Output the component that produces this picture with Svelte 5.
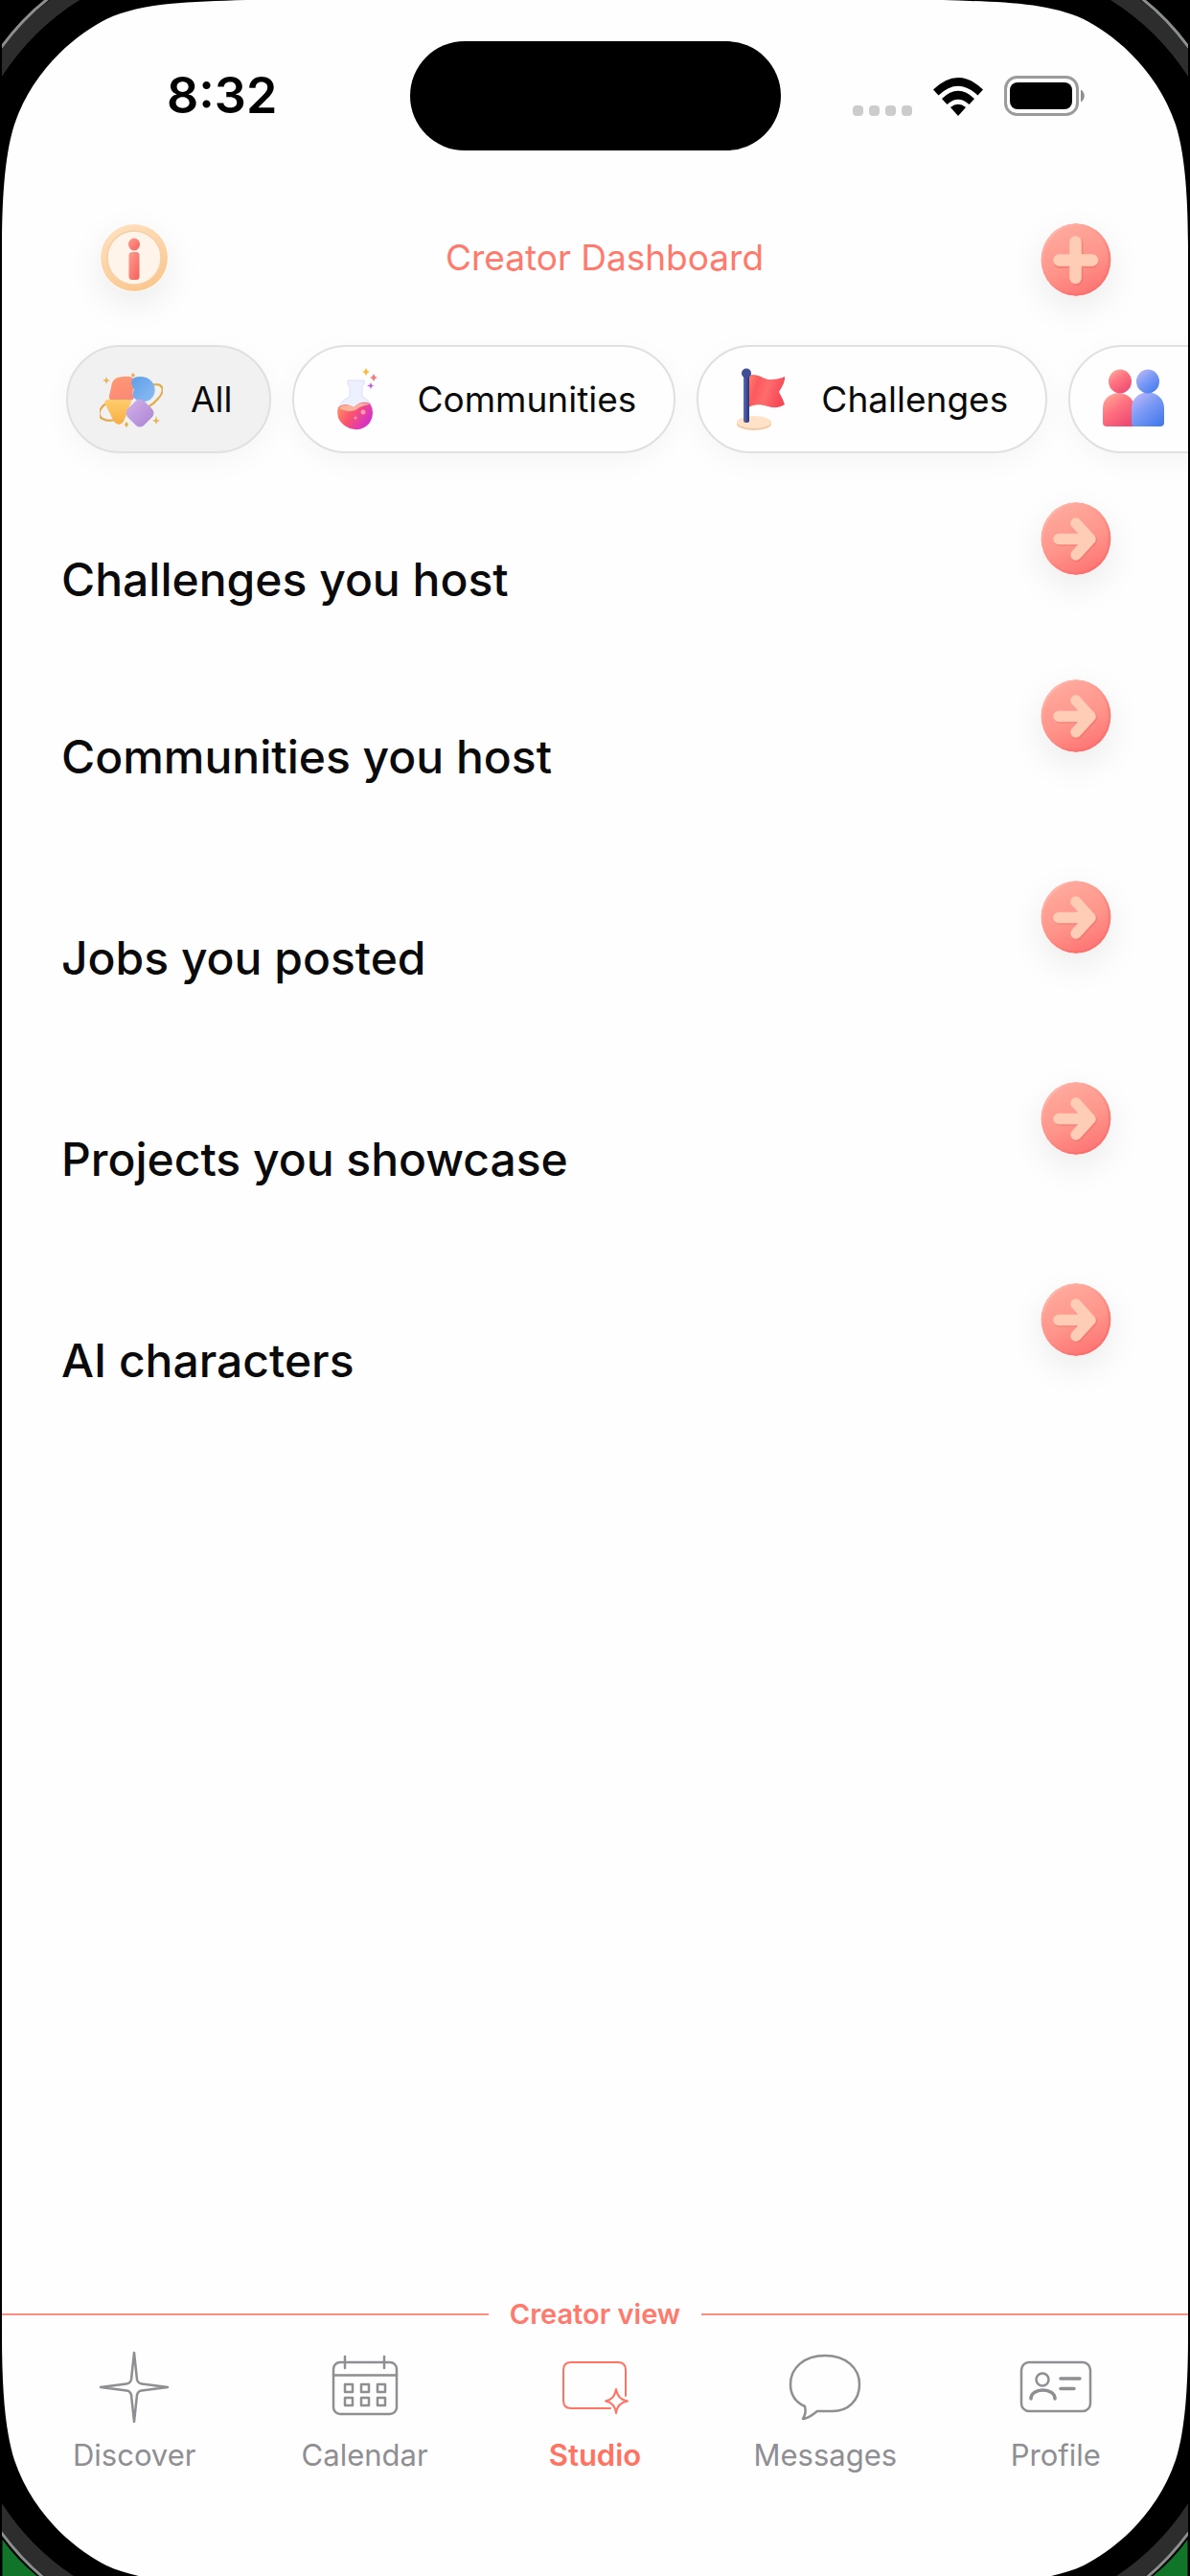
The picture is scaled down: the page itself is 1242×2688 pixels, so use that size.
<script>
  const chips = [
    { label: 'All', icon: 'all', active: true },
    { label: 'Communities', icon: 'flask' },
    { label: 'Challenges', icon: 'flag' },
    { icon: 'people' }
  ];
  const sections = [
    'Challenges you host',
    'Communities you host',
    'Jobs you posted',
    'Projects you showcase',
    'AI characters'
  ];
  const tabs = ['Discover', 'Calendar', 'Studio', 'Messages', 'Profile'];
  const corners = ['tl', 'tr', 'bl', 'br'];
</script>

<svg class="defs" width="0" height="0" aria-hidden="true">
  <defs>
    <linearGradient id="coral" x1="0.2" y1="0" x2="0.6" y2="1">
      <stop offset="0" stop-color="#ffac9f" /><stop offset="0.6" stop-color="#ff948a" /><stop offset="1" stop-color="#fd7473" />
    </linearGradient>
    <linearGradient id="shine" x1="0" y1="0" x2="0.7" y2="0.7">
      <stop offset="0" stop-color="#ffd6cb" /><stop offset="0.5" stop-color="#ff9a8e" stop-opacity="0.2" /><stop offset="1" stop-color="#f86a68" stop-opacity="0.5" />
    </linearGradient>
    <linearGradient id="ring" x1="0" y1="0" x2="0.5" y2="1">
      <stop offset="0" stop-color="#ffe3c4" /><stop offset="1" stop-color="#fbc890" />
    </linearGradient>
    <linearGradient id="redI" x1="0" y1="0" x2="1" y2="1">
      <stop offset="0" stop-color="#ff9d90" /><stop offset="1" stop-color="#f5605a" />
    </linearGradient>
    <linearGradient id="tomato" x1="0" y1="0" x2="0.4" y2="1">
      <stop offset="0" stop-color="#ff9a72" /><stop offset="1" stop-color="#fa8a78" />
    </linearGradient>
    <linearGradient id="sky" x1="0" y1="0" x2="1" y2="1">
      <stop offset="0" stop-color="#5e9fe8" /><stop offset="1" stop-color="#8dbcf2" />
    </linearGradient>
    <linearGradient id="gold" x1="0" y1="0" x2="0" y2="1">
      <stop offset="0" stop-color="#ffce6b" /><stop offset="1" stop-color="#f5ae45" />
    </linearGradient>
    <linearGradient id="lilac" x1="0" y1="0" x2="1" y2="1">
      <stop offset="0" stop-color="#d2b4ea" /><stop offset="1" stop-color="#ab82d2" />
    </linearGradient>
    <linearGradient id="potion" x1="0" y1="0" x2="1" y2="0.5">
      <stop offset="0" stop-color="#ff9a62" /><stop offset="0.5" stop-color="#fb5270" /><stop offset="1" stop-color="#d532c8" />
    </linearGradient>
    <linearGradient id="cloth" x1="0" y1="0" x2="1" y2="0.3">
      <stop offset="0" stop-color="#ff8272" /><stop offset="0.3" stop-color="#fb5a5e" /><stop offset="0.6" stop-color="#ff6c6c" /><stop offset="1" stop-color="#f64a58" />
    </linearGradient>
    <linearGradient id="pole" x1="0" y1="0" x2="1" y2="0">
      <stop offset="0" stop-color="#5a6cae" /><stop offset="1" stop-color="#27347a" />
    </linearGradient>
    <linearGradient id="rose" x1="0" y1="0" x2="0.7" y2="1">
      <stop offset="0" stop-color="#ffb39a" /><stop offset="0.5" stop-color="#ff7280" /><stop offset="1" stop-color="#ee4a72" />
    </linearGradient>
    <linearGradient id="indigo" x1="0" y1="0" x2="0.8" y2="1">
      <stop offset="0" stop-color="#c8bdfb" /><stop offset="0.5" stop-color="#7b9af4" /><stop offset="1" stop-color="#467bee" />
    </linearGradient>
  </defs>
</svg>

<div class="screen">
  <header class="status">
    <time class="clock">8:32</time>
    <div class="island"></div>
    <div class="signals">
      <span class="dots"><i></i><i></i><i></i><i></i></span>
      <svg class="wifi" viewBox="0 0 52 40" aria-hidden="true">
        <path d="M0 12.500Q26-12.500 52 12.500L46.500 18.500Q26-1 5.500 18.500Z" />
        <path d="M9 22Q26 5.500 43 22L37.500 28Q26 17.500 14.500 28Z" />
        <path d="M18 31Q26 24.500 34 31L26 40Z" />
      </svg>
      <svg class="battery" viewBox="0 0 86 42" aria-hidden="true">
        <rect x="1.500" y="1.500" width="75" height="39" rx="12" fill="none" stroke="#9b9b9b" stroke-width="3" />
        <rect x="6" y="7" width="65" height="28" rx="8" />
        <path d="M80 14.500C85 17 85 25 80 27.500Z" fill="#8f8f8f" />
      </svg>
    </div>
  </header>

  <div class="titlebar">
    <button class="round" aria-label="About this dashboard">
      <svg class="info" viewBox="0 0 72 72" aria-hidden="true">
        <circle cx="36" cy="36" r="35" fill="url(#ring)" />
        <circle cx="36" cy="36" r="28" fill="#fff4ea" stroke="#f6cfa6" stroke-width="1.500" />
        <ellipse cx="36" cy="22" rx="6" ry="6.500" fill="url(#redI)" />
        <rect x="30.500" y="30" width="11" height="29" rx="3.500" fill="url(#redI)" />
      </svg>
    </button>
    <h1>Creator Dashboard</h1>
    <button class="round" aria-label="Create">
      <svg class="disc" viewBox="0 0 74 76" aria-hidden="true">
        <ellipse cx="37" cy="38" rx="36.500" ry="38" fill="url(#coral)" />
        <ellipse cx="37" cy="38" rx="35" ry="36.500" fill="none" stroke="url(#shine)" stroke-width="2" />
        <path d="M38 21V59M20 40.500H54" stroke="#ee6f68" stroke-opacity="0.5" stroke-width="13" stroke-linecap="round" />
        <path d="M36.500 19.500V57M19.500 38.500H54" stroke="#ffcdb6" stroke-width="12.500" stroke-linecap="round" />
      </svg>
    </button>
  </div>

  <div class="chips">
    {#each chips as chip}
      <button class="chip" class:active={chip.active} class:bare={!chip.label} aria-pressed={!!chip.active} aria-label={chip.label ?? 'People'}>
        <svg viewBox="0 0 66 66" aria-hidden="true">
          {#if chip.icon === 'all'}
            <path d="M54 18C65 15 70 22 61 32Q57 37 50 41M8 36C-1 42 -3 50 3 53Q8 56 17 54" fill="none" stroke="#e3ab50" stroke-width="2.200" />
            <path d="M12 20Q13 9 25 9Q34 8 35 12Q33 17 36 21Q33 26 36 31Q35 34 30 34L13 34Q9 33 10 29Z" fill="url(#tomato)" />
            <path d="M34 12Q36 9 42 9C62 9 62 34 47 35Q39 36 35 30Q34 26 36 22Q32 17 34 12Z" fill="url(#sky)" />
            <path d="M9 33H29Q35 33 32 38L25 56Q20 62 15 56L6 38Q4 33 9 33Z" fill="url(#gold)" />
            <path d="M38 34Q42 31 46 34L55 43Q58 47 55 51L46 60Q42 63 38 60L29 51Q26 47 29 43Z" fill="url(#lilac)" />
            <path d="M7 9L8 12L11 13L8 14L7 17L6 14L3 13L6 12ZM35 5L37 8L34 10L33 7ZM59 50L60 54L63 55L60 56L59 59L58 56L55 55L58 54ZM28 56L30 59L28 62L26 59Z" fill="#e9ae4c" />
          {:else if chip.icon === 'flask'}
            <path d="M23 13H40V17L38 19V30Q49 35 49 46A19 19 0 0 1 13 46Q13 35 25 30V19L23 17Z" fill="#edf0ff" stroke="#dcdffa" stroke-width="1" />
            <path d="M13 41Q20 35 29 41Q38 33 46 37Q52 47 46 57Q38 67 25 63Q9 56 13 41Z" fill="url(#potion)" />
            <path d="M14 42Q21 36 29 41Q38 34 46 38Q37 39 31 44Q22 47 14 42Z" fill="#ffb29b" />
            <circle cx="39" cy="46" r="2.500" fill="#ff9ab4" /><circle cx="31" cy="52" r="1.500" fill="#ff9ab4" />
            <path d="M42 0L43.500 3L46 4L43.500 5L42 8L40.500 5L38 4L40.500 3Z" fill="#ffb72e" />
            <path d="M50 6L51.500 9L54 10L51.500 11L50 14L48.500 11L46 10L48.500 9Z" fill="#ff7470" />
            <path d="M47 15L48 17.500L50 18.500L48 19.500L47 22L46 19.500L43 18.500L46 17.500Z" fill="#c45ae0" />
          {:else if chip.icon === 'flag'}
            <ellipse cx="25" cy="58.500" rx="18" ry="6.500" fill="#f3c8a4" />
            <ellipse cx="25" cy="56.500" rx="18" ry="6.500" fill="#ffe2c8" />
            <path d="M19 8C28 4 34 12 42 12Q51 12 57 9Q58 14 51 25Q55 32 57 38C48 44 40 40 35 39Q26 37 19 41Z" fill="url(#cloth)" />
            <rect x="14" y="7" width="6" height="50" rx="2" fill="url(#pole)" />
            <circle cx="17" cy="5.500" r="5" fill="#3f4e94" />
          {:else}
            <path d="M1 42C1 21 34 21 34 42V61H5Q1 61 1 57Z" fill="url(#rose)" />
            <ellipse cx="19" cy="14" rx="12" ry="12.500" fill="url(#rose)" />
            <path d="M31 42C31 20 65 20 65 42V57Q65 61 61 61H34Q31 61 31 57Z" fill="url(#indigo)" />
            <ellipse cx="48" cy="14" rx="12" ry="12.500" fill="url(#indigo)" />
          {/if}
        </svg>
        {#if chip.label}<span>{chip.label}</span>{/if}
      </button>
    {/each}
  </div>

  <main>
    {#each sections as title}
      <section>
        <h2>{title}</h2>
        <button class="round" aria-label="Open {title}">
          <svg class="disc" viewBox="0 0 74 76" aria-hidden="true">
            <ellipse cx="37" cy="38" rx="36.500" ry="38" fill="url(#coral)" />
            <ellipse cx="37" cy="38" rx="35" ry="36.500" fill="none" stroke="url(#shine)" stroke-width="2" />
            <g fill="none" stroke-linecap="round" stroke-linejoin="round">
              <path d="M20 40H46M38 23.500L53.500 40L38 56.500" stroke="#ee6f68" stroke-opacity="0.5" stroke-width="11.500" />
              <path d="M19 38.500H46M37 22L52 38.500L37 55" stroke="#ffcdb6" stroke-width="11.500" />
            </g>
          </svg>
        </button>
      </section>
    {/each}
  </main>

  <footer>
    <div class="mode"><span>Creator view</span></div>
    <nav aria-label="Main">
      {#each tabs as tab}
        <a href="#{tab.toLowerCase()}" class:current={tab === 'Studio'} aria-current={tab === 'Studio' ? 'page' : undefined}>
          <svg viewBox="0 0 76 76" aria-hidden="true">
            {#if tab === 'Discover'}
              <path d="M38 2L41 30Q42 34 46 34.500L73 38L46 41.500Q42 42 41 46L38 74L35 46Q34 42 30 41.500L3 38L30 34.500Q34 34 35 30Z" />
            {:else if tab === 'Calendar'}
              <rect x="5" y="12" width="66" height="54" rx="7" />
              <path d="M5 25.500H71M17 6V18M58 6V18" />
              <path d="M17 35h8v8h-8zM34 35h8v8h-8zM51 35h8v8h-8zM17 49h8v8h-8zM34 49h8v8h-8zM51 49h8v8h-8z" />
            {:else if tab === 'Studio'}
              <path d="M54 60H13Q5 60 5 52V20Q5 12 13 12H62Q70 12 70 20V47" />
              <path d="M60 40Q61.500 51 72 52.500Q61.500 54 60 65Q58.500 54 49 52.500Q58.500 51 60 40Z" />
            {:else if tab === 'Messages'}
              <path d="M38 5C60 5 74 18 74 35C74 52 62 63 46 63H30Q20 71 15 71Q19 65 17 58C8 54 2 46 2 35C2 18 16 5 38 5Z" />
            {:else}
              <rect x="2" y="12" width="72" height="51" rx="8" />
              <ellipse cx="24" cy="30" rx="6.500" ry="6.500" />
              <path d="M12 50C12 38 37 38 37 50M43 29H63M43 39.500H57" stroke-width="3.500" />
            {/if}
          </svg>
          <span>{tab}</span>
        </a>
      {/each}
    </nav>
  </footer>

  {#each corners as c}
    <svg class="corner {c}" viewBox="0 0 260 260" aria-hidden="true">
      <path class="bezel" d="M0 -10H258V0C200 2 150 2 111 20C85 33 36 68 15 130C6 158 2 200 2 260H0Z" />
      <path class="rim" d="M0 0H83Q32 32 0 83Z" />
      <path class="outside" d="M0 0H48Q20 20 0 50Z" />
      <path class="edge" d="M51 -2Q22 20 -2 54" />
    </svg>
  {/each}
</div>

<style>
  :global(body) {
    margin: 0;
    background: #000;
  }
  .defs {
    position: absolute;
  }
  .screen {
    position: relative;
    box-sizing: border-box;
    min-height: 100vh;
    overflow: hidden;
    display: flex;
    flex-direction: column;
    background: #fefefe;
    border: solid #000;
    border-width: 0 2px;
    color: #0a0a0a;
    font-family: Inter, 'Liberation Sans', sans-serif;
  }
  button {
    border: 0;
    padding: 0;
    background: none;
    font: inherit;
    color: inherit;
    cursor: pointer;
  }
  h1,
  h2 {
    margin: 0;
  }
  svg {
    display: block;
    flex: none;
  }
  .status {
    display: grid;
    grid-template-columns: 1fr auto 1fr;
    align-items: center;
    padding: 43px 106px 0;
  }
  .clock {
    padding-left: 66px;
    font-size: 52px;
    font-weight: 600;
    line-height: 60px;
    color: #000;
  }
  .island {
    width: 387px;
    height: 114px;
    border-radius: 57px;
    background: #000;
  }
  .signals {
    display: flex;
    justify-content: flex-end;
    align-items: flex-end;
  }
  .dots {
    display: flex;
    gap: 6px;
    margin-right: 22px;
  }
  .dots i {
    width: 11px;
    height: 11px;
    border-radius: 4px;
    background: #ccc;
  }
  .wifi {
    width: 52px;
    height: 40px;
    margin-right: 22px;
  }
  .battery {
    width: 86px;
    height: 42px;
  }
  .titlebar {
    display: flex;
    justify-content: space-between;
    align-items: flex-start;
    padding: 76px 80px 0 102px;
  }
  h1 {
    padding-top: 14px;
    font-size: 37px;
    line-height: 44px;
    font-weight: 400;
    color: #ff7a6c;
  }
  .round svg {
    border-radius: 50%;
    box-shadow: 0 12px 36px rgba(0, 0, 0, 0.08);
  }
  .info {
    width: 72px;
    height: 72px;
  }
  .disc {
    width: 74px;
    height: 76px;
    fill: none;
  }
  .chips {
    display: flex;
    gap: 22px;
    overflow: hidden;
    padding: 51px 0 51px 67px;
  }
  .chip {
    flex: none;
    box-sizing: border-box;
    display: flex;
    align-items: center;
    gap: 29px;
    height: 113px;
    padding: 0 39px 0 33px;
    border: 2px solid #e0e0e0;
    border-radius: 57px;
    background: #fefefe;
    box-shadow: 0 8px 30px rgba(0, 0, 0, 0.04);
    font-size: 37px;
    line-height: 44px;
  }
  .chip.active {
    background: #f1f1f1;
  }
  .chip.bare {
    min-width: 240px;
  }
  .chip svg {
    width: 66px;
    height: 66px;
  }
  main {
    flex: 1;
  }
  section {
    display: flex;
    justify-content: space-between;
    align-items: flex-start;
    min-height: 210px;
    padding: 0 80px 0 62px;
  }
  section:first-child {
    min-height: 185px;
  }
  h2 {
    padding-top: 51px;
    font-size: 48px;
    line-height: 60px;
    font-weight: 500;
  }
  .mode {
    display: flex;
    align-items: center;
    gap: 22px;
    font-size: 29px;
    line-height: 34px;
    font-weight: 600;
    color: #ff7a6c;
  }
  .mode::before,
  .mode::after {
    content: '';
    flex: 1;
    height: 2px;
    background: #ff8e82;
  }
  nav {
    display: grid;
    grid-template-columns: repeat(5, 1fr);
    padding: 21px 18px 107px;
  }
  nav a {
    display: flex;
    flex-direction: column;
    align-items: center;
    gap: 14px;
    font-size: 31px;
    line-height: 38px;
    color: #8e8e93;
    text-decoration: none;
  }
  nav a.current {
    color: #ff7363;
    font-weight: 600;
  }
  nav svg {
    width: 76px;
    height: 76px;
    fill: none;
    stroke: currentColor;
    stroke-width: 2.5;
    stroke-linecap: round;
    stroke-linejoin: round;
  }
  nav .current svg {
    stroke-width: 2;
  }
  .corner {
    position: absolute;
    width: 260px;
    height: 260px;
    pointer-events: none;
  }
  .tl {
    top: 0;
    left: -2px;
  }
  .tr {
    top: 0;
    right: -2px;
    transform: scaleX(-1);
  }
  .bl {
    bottom: -4px;
    left: -2px;
    transform: scaleY(-1);
  }
  .br {
    bottom: -4px;
    right: -2px;
    transform: scale(-1, -1);
  }
  .bezel {
    fill: #000;
  }
  .bl .bezel,
  .br .bezel {
    transform: translateY(-5px);
  }
  .rim {
    fill: #2d2d2d;
  }
  .outside {
    fill: #000;
    stroke: #000;
    stroke-width: 5;
  }
  .bl .outside,
  .br .outside {
    fill: #107528;
  }
  .edge {
    fill: none;
    stroke: #8b908e;
    stroke-width: 3;
  }
</style>
